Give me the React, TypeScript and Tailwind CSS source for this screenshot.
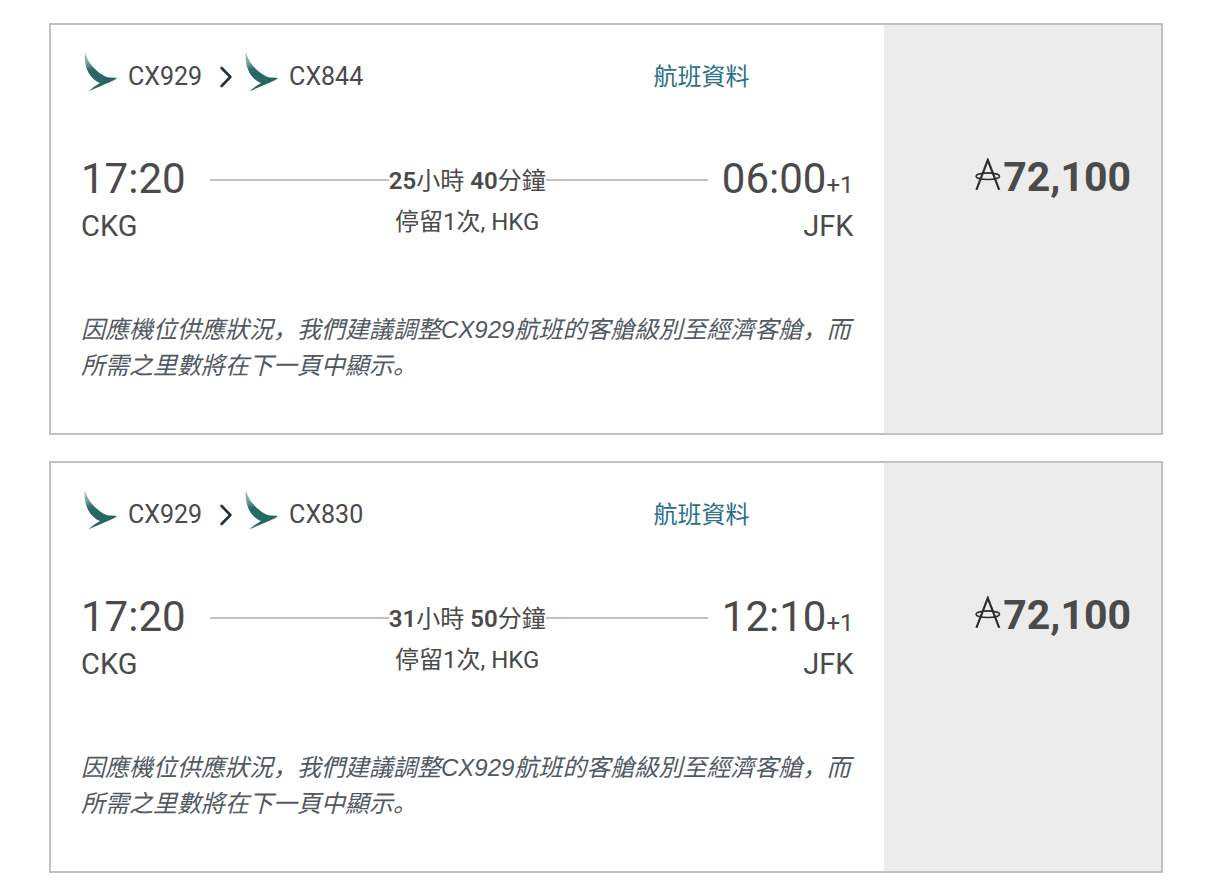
import React from "react";

type Flight = {
  id: string;
  segments: string[];
  departTime: string;
  departAirport: string;
  hours: number;
  minutes: number;
  stops: string;
  arriveTime: string;
  dayOffset: string;
  arriveAirport: string;
  note: string;
  miles: string;
};

const NOTE =
  "因應機位供應狀況，我們建議調整CX929航班的客艙級別至經濟客艙，而所需之里數將在下一頁中顯示。";

const flights: Flight[] = [
  {
    id: "cx929-cx844",
    segments: ["CX929", "CX844"],
    departTime: "17:20",
    departAirport: "CKG",
    hours: 25,
    minutes: 40,
    stops: "停留1次, HKG",
    arriveTime: "06:00",
    dayOffset: "+1",
    arriveAirport: "JFK",
    note: NOTE,
    miles: "72,100",
  },
  {
    id: "cx929-cx830",
    segments: ["CX929", "CX830"],
    departTime: "17:20",
    departAirport: "CKG",
    hours: 31,
    minutes: 50,
    stops: "停留1次, HKG",
    arriveTime: "12:10",
    dayOffset: "+1",
    arriveAirport: "JFK",
    note: NOTE,
    miles: "72,100",
  },
];

function BrushwingLogo({ id }: { id: string }) {
  return (
    <svg viewBox="0 0 33 40" className="h-10 w-[33px] shrink-0" aria-hidden="true">
      <defs>
        <linearGradient id={id} x1="0.1" y1="0" x2="0.3" y2="1">
          <stop offset="0" stopColor="#a3bfbd" />
          <stop offset="0.25" stopColor="#7ba3a0" />
          <stop offset="0.45" stopColor="#2a6866" />
          <stop offset="1" stopColor="#246663" />
        </linearGradient>
      </defs>
      <path
        d="M1 0.3 C2 4.5 4 8.8 7.5 13.3 C12 18.8 17 22.6 22 24.7 C25.8 26 29.5 25.2 33 26 C31.5 27.8 28 29 24.5 30.7 C18 33.3 11.5 36.3 4.5 39.2 C7.5 36.4 11.5 33.8 16 31 C11.5 29.2 7.2 25.8 4.2 20.2 C1 14 0 6.5 1 0.3 Z"
        fill={`url(#${id})`}
      />
    </svg>
  );
}

function Chevron() {
  return (
    <svg viewBox="0 0 14 24" className="h-6 w-[14px] shrink-0" fill="none" aria-hidden="true">
      <path
        d="M2.6 3 L11.4 12 L2.6 21"
        stroke="#252f3d"
        strokeWidth="2.6"
        strokeLinecap="round"
        strokeLinejoin="round"
      />
    </svg>
  );
}

// Asia Miles currency sign: an A with a ring around it
function MilesSign() {
  return (
    <svg viewBox="0 0 26 32" className="h-8 w-[26px] shrink-0" fill="none" stroke="#2e2e2e" aria-hidden="true">
      <path d="M1.4 31.8 L12.8 2 L24.2 31.8" strokeWidth="2.2" />
      <path d="M8 15 H18" strokeWidth="1.1" />
      <ellipse cx="12.8" cy="18.3" rx="11.8" ry="3.2" strokeWidth="1.5" />
    </svg>
  );
}

function FlightCard({ flight }: { flight: Flight }) {
  return (
    <article className="flex border-2 border-[#c4c0c2]">
      <div className="w-3/4 px-[30px] pt-7 pb-[49px]">
        <div className="flex h-12 items-center justify-between pr-[104px]">
          <div className="flex items-center">
            {flight.segments.map((seg, i) => (
              <React.Fragment key={seg}>
                {i > 0 && (
                  <span className="mr-[9px] ml-[17px]">
                    <Chevron />
                  </span>
                )}
                <span className="flex items-center">
                  <span className="mr-[11px] ml-[3px] pb-2.5">
                    <BrushwingLogo id={`${flight.id}-${i}`} />
                  </span>
                  <span className="text-[25px] leading-9">{seg}</span>
                </span>
              </React.Fragment>
            ))}
          </div>
          <a href="#details" className="text-2xl leading-9 text-[#2c6f87]">
            航班資料
          </a>
        </div>

        <div className="mt-[54px] grid grid-cols-[1fr_auto_1fr] items-center">
          <div className="flex items-center">
            <span className="pb-0.5 text-[42px] leading-[48px]">{flight.departTime}</span>
            <span className="ml-6 h-0.5 flex-1 bg-[#c4c0c2]" />
          </div>
          <div className="pt-0.5 text-2xl leading-9">
            <b className="font-semibold">{flight.hours}</b>小時{" "}
            <b className="font-semibold">{flight.minutes}</b>分鐘
          </div>
          <div className="flex items-center">
            <span className="mr-[14px] h-0.5 flex-1 bg-[#c4c0c2]" />
            <span className="pb-0.5 text-[42px] leading-[48px]">
              {flight.arriveTime}
              <span className="text-2xl">{flight.dayOffset}</span>
            </span>
          </div>
        </div>

        <div className="mt-[3px] grid grid-cols-[1fr_auto_1fr]">
          <div className="text-[29px] leading-9">{flight.departAirport}</div>
          <div className="text-2xl leading-7">{flight.stops}</div>
          <div className="text-right text-[29px] leading-9">{flight.arriveAirport}</div>
        </div>

        <p className="mt-[68px] font-['Liberation_Sans','Noto_Sans_CJK_SC',sans-serif] text-2xl leading-9 text-[#525861] italic">
          {flight.note}
        </p>
      </div>

      <div className="flex w-1/4 items-start justify-end bg-[#ececec] px-[30px] pt-32">
        <div className="flex items-center">
          <span className="pb-1.5">
            <MilesSign />
          </span>
          <span className="ml-0.5 text-[41px] leading-[48px] font-bold">{flight.miles}</span>
        </div>
      </div>
    </article>
  );
}

export default function App() {
  return (
    <main className="flex flex-col gap-[26px] bg-white pt-[23px] pr-[53px] pb-4 pl-[49px] font-[Roboto,'Noto_Sans_CJK_SC',sans-serif] text-[#4a4a4a]">
      {flights.map((f) => (
        <FlightCard key={f.id} flight={f} />
      ))}
    </main>
  );
}
